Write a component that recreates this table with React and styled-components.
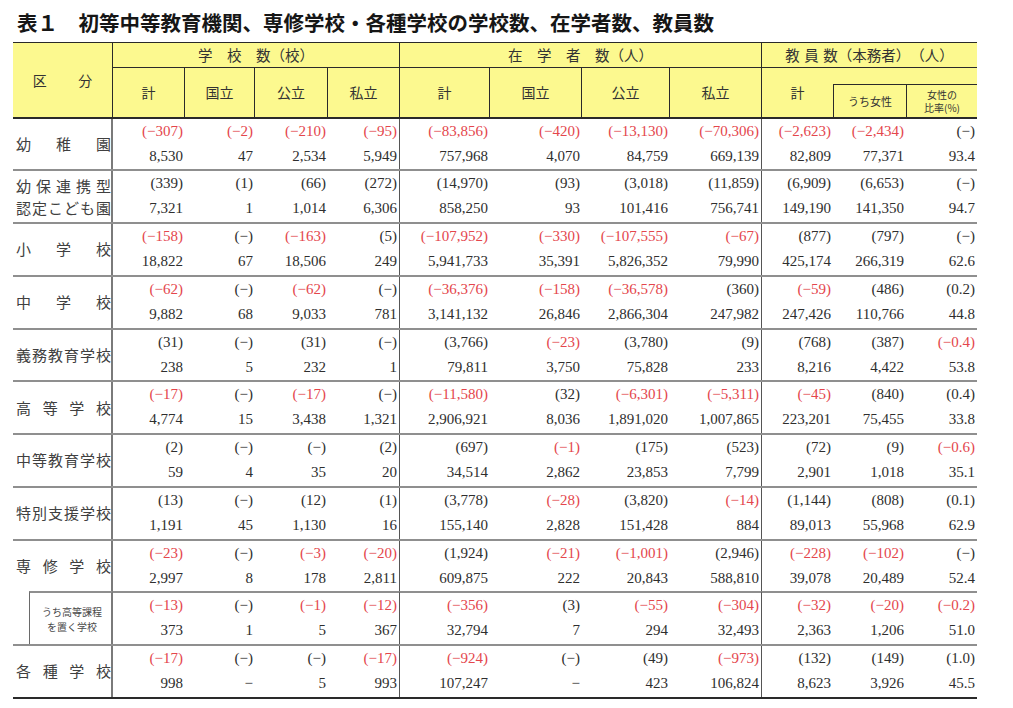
import React from "react";
import styled, { createGlobalStyle } from "styled-components";

const GlobalStyle = createGlobalStyle`
  html, body { margin: 0; padding: 0; background: #ffffff; }
  body { font-family: "Noto Sans CJK JP", sans-serif; }
  * { box-sizing: border-box; }
`;

const COLS = "16px 84px 72px 70px 73px 72px 90px 92px 88px 92px 71px 73px 71px";
const YELLOW = "#fcf98f";
const INK = "#2a2a2a";
const GRID_GRAY = "#8f8f8f";

const DATA = [
  { label: ["幼稚園"], top: ["(−307)","(−2)","(−210)","(−95)","(−83,856)","(−420)","(−13,130)","(−70,306)","(−2,623)","(−2,434)","(−)"],
    bottom: ["8,530","47","2,534","5,949","757,968","4,070","84,759","669,139","82,809","77,371","93.4"] },
  { label: ["幼保連携型","認定こども園"], top: ["(339)","(1)","(66)","(272)","(14,970)","(93)","(3,018)","(11,859)","(6,909)","(6,653)","(−)"],
    bottom: ["7,321","1","1,014","6,306","858,250","93","101,416","756,741","149,190","141,350","94.7"] },
  { label: ["小学校"], top: ["(−158)","(−)","(−163)","(5)","(−107,952)","(−330)","(−107,555)","(−67)","(877)","(797)","(−)"],
    bottom: ["18,822","67","18,506","249","5,941,733","35,391","5,826,352","79,990","425,174","266,319","62.6"] },
  { label: ["中学校"], top: ["(−62)","(−)","(−62)","(−)","(−36,376)","(−158)","(−36,578)","(360)","(−59)","(486)","(0.2)"],
    bottom: ["9,882","68","9,033","781","3,141,132","26,846","2,866,304","247,982","247,426","110,766","44.8"] },
  { label: ["義務教育学校"], top: ["(31)","(−)","(31)","(−)","(3,766)","(−23)","(3,780)","(9)","(768)","(387)","(−0.4)"],
    bottom: ["238","5","232","1","79,811","3,750","75,828","233","8,216","4,422","53.8"] },
  { label: ["高等学校"], top: ["(−17)","(−)","(−17)","(−)","(−11,580)","(32)","(−6,301)","(−5,311)","(−45)","(840)","(0.4)"],
    bottom: ["4,774","15","3,438","1,321","2,906,921","8,036","1,891,020","1,007,865","223,201","75,455","33.8"] },
  { label: ["中等教育学校"], top: ["(2)","(−)","(−)","(2)","(697)","(−1)","(175)","(523)","(72)","(9)","(−0.6)"],
    bottom: ["59","4","35","20","34,514","2,862","23,853","7,799","2,901","1,018","35.1"] },
  { label: ["特別支援学校"], top: ["(13)","(−)","(12)","(1)","(3,778)","(−28)","(3,820)","(−14)","(1,144)","(808)","(0.1)"],
    bottom: ["1,191","45","1,130","16","155,140","2,828","151,428","884","89,013","55,968","62.9"] },
  { label: ["専修学校"], open: true, top: ["(−23)","(−)","(−3)","(−20)","(1,924)","(−21)","(−1,001)","(2,946)","(−228)","(−102)","(−)"],
    bottom: ["2,997","8","178","2,811","609,875","222","20,843","588,810","39,078","20,489","52.4"] },
  { label: ["うち高等課程","を置く学校"], nested: true, top: ["(−13)","(−)","(−1)","(−12)","(−356)","(3)","(−55)","(−304)","(−32)","(−20)","(−0.2)"],
    bottom: ["373","1","5","367","32,794","7","294","32,493","2,363","1,206","51.0"] },
  { label: ["各種学校"], last: true, top: ["(−17)","(−)","(−)","(−17)","(−924)","(−)","(49)","(−973)","(132)","(149)","(1.0)"],
    bottom: ["998","−","5","993","107,247","−","423","106,824","8,623","3,926","45.5"] },
];

const DIVIDER_COLS = [3, 7];

const Page = styled.div`
  padding-left: 13px;
  width: 977px;
`;

const Title = styled.h1`
  margin: 0;
  padding: 8px 0 5.5px 4px;
  font-family: "Noto Sans CJK JP", sans-serif;
  font-weight: 700;
  font-size: 20.5px;
  line-height: 28px;
  color: #161616;
  white-space: nowrap;
  text-spacing-trim: space-all;
`;

const Header = styled.div`
  display: grid;
  grid-template-columns: ${COLS};
  grid-template-rows: 25px 16px 33px;
  background: ${YELLOW};
  border-top: 1.5px solid ${INK};
  border-bottom: 2px solid ${INK};
  color: #333;
  font-family: "Noto Sans CJK JP", sans-serif;
  font-size: 14px;
  text-spacing-trim: space-all;
`;

const HeadCell = styled.div`
  grid-column: ${(p) => p.$col};
  grid-row: ${(p) => p.$row};
  display: flex;
  flex-direction: column;
  align-items: center;
  justify-content: center;
  border-right: ${(p) => (p.$right ? `${p.$right} solid ${INK}` : "none")};
  border-bottom: ${(p) => (p.$bottom ? `1px solid ${INK}` : "none")};
  border-left: ${(p) => (p.$left ? `1px solid ${INK}` : "none")};
  border-top: ${(p) => (p.$top ? `1px solid ${INK}` : "none")};
  font-size: ${(p) => p.$size || 14}px;
  line-height: ${(p) => p.$lh || 20}px;
  white-space: nowrap;
`;

const Kubun = styled.div`
  display: flex;
  gap: 31.5px;
  font-size: 14px;
`;

const Spaced = styled.span`
  letter-spacing: ${(p) => p.$ls}px;
`;

const Row = styled.div`
  display: grid;
  grid-template-columns: ${COLS};
  height: ${(p) => p.$h}px;
  border-bottom: ${(p) =>
    p.$last ? `2px solid ${INK}` : p.$open ? "none" : `2px solid ${GRID_GRAY}`};
`;

const LabelCell = styled.div`
  grid-column: ${(p) => (p.$nested ? "2 / 3" : "1 / 3")};
  display: flex;
  flex-direction: column;
  justify-content: center;
  padding: 0 0 0 3px;
  border-right: 2px solid #7a7a7a;
  border-left: ${(p) => (p.$nested ? `1.5px solid #6a6a6a` : "none")};
  border-top: ${(p) => (p.$topLine ? `2px solid ${GRID_GRAY}` : "none")};
  color: #404040;
  font-family: "Noto Sans CJK JP", sans-serif;
  font-size: 15px;
  line-height: 22px;
`;

const Spread = styled.div`
  display: flex;
  justify-content: space-between;
`;

const SmallLabel = styled.div`
  text-align: center;
  font-size: 10px;
  line-height: 15px;
  color: #4a4a4a;
`;

const Spacer = styled.div`
  grid-column: 1 / 2;
`;

const NumCell = styled.div`
  display: flex;
  flex-direction: column;
  align-items: flex-end;
  padding-right: 2px;
  border-right: ${(p) => (p.$divider ? "1px solid #555" : "none")};
  border-top: ${(p) => (p.$topLine ? `2px solid ${GRID_GRAY}` : "none")};
  font-family: "Liberation Serif", "Noto Sans CJK JP", serif;
  font-size: 15px;
  line-height: 25px;
  color: #2e2e2e;
  white-space: nowrap;
`;

const Val = styled.span`
  color: ${(p) => (p.$neg ? "#e4464c" : "inherit")};
`;

const isNeg = (v) => /^\(−\d/.test(v);

function Label({ row }) {
  if (row.nested) {
    return (
      <>
        <Spacer />
        <LabelCell $nested $topLine>
          {row.label.map((l) => (
            <SmallLabel key={l}>{l}</SmallLabel>
          ))}
        </LabelCell>
      </>
    );
  }
  return (
    <LabelCell>
      {row.label.map((l) => (
        <Spread key={l}>
          {[...l].map((ch, i) => (
            <span key={i}>{ch}</span>
          ))}
        </Spread>
      ))}
    </LabelCell>
  );
}

function DataRow({ row }) {
  const h = row.open ? 50.75 : row.nested ? 54.75 : 52.75;
  return (
    <Row $h={h} $open={row.open} $last={row.last}>
      <Label row={row} />
      {row.top.map((t, i) => (
        <NumCell key={i} $divider={DIVIDER_COLS.includes(i)} $topLine={row.nested}>
          <Val $neg={isNeg(t)}>{t}</Val>
          <Val>{row.bottom[i]}</Val>
        </NumCell>
      ))}
    </Row>
  );
}

export default function App() {
  return (
    <>
      <GlobalStyle />
      <Page>
        <Title>表１　初等中等教育機関、専修学校・各種学校の学校数、在学者数、教員数</Title>
        <Header>
          <HeadCell $col="1 / 3" $row="1 / 4" $right="1.5px">
            <Kubun>
              <span>区</span>
              <span>分</span>
            </Kubun>
          </HeadCell>
          <HeadCell $col="3 / 7" $row="1" $right="1px" $bottom $size={14.5}>
            学　校　数（校）
          </HeadCell>
          <HeadCell $col="7 / 11" $row="1" $right="1px" $bottom $size={14.5}>
            在　学　者　数（人）
          </HeadCell>
          <HeadCell $col="11 / 14" $row="1" $bottom $size={14.5}>
            <span>
              <Spaced $ls={4.5}>教員</Spaced>
              <Spaced $ls={0}>数（本務者）（人）</Spaced>
            </span>
          </HeadCell>

          <HeadCell $col="3" $row="2 / 4" $right="1px">計</HeadCell>
          <HeadCell $col="4" $row="2 / 4" $right="1px">国立</HeadCell>
          <HeadCell $col="5" $row="2 / 4" $right="1px">公立</HeadCell>
          <HeadCell $col="6" $row="2 / 4" $right="1px">私立</HeadCell>

          <HeadCell $col="7" $row="2 / 4" $right="1px">計</HeadCell>
          <HeadCell $col="8" $row="2 / 4" $right="1px">国立</HeadCell>
          <HeadCell $col="9" $row="2 / 4" $right="1px">公立</HeadCell>
          <HeadCell $col="10" $row="2 / 4" $right="1px">私立</HeadCell>

          <HeadCell $col="11" $row="2 / 4">計</HeadCell>
          <HeadCell $col="12" $row="3" $left $top $size={11}>
            うち女性
          </HeadCell>
          <HeadCell $col="13" $row="3" $left $top $size={10} $lh={13}>
            <span>女性の</span>
            <span>比率(%)</span>
          </HeadCell>
        </Header>
        {DATA.map((row, i) => (
          <DataRow key={i} row={row} />
        ))}
      </Page>
    </>
  );
}
